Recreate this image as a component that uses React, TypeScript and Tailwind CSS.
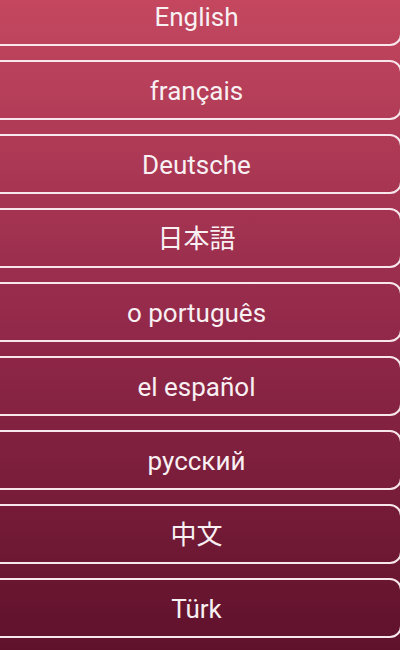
const languages = [
  "English",
  "français",
  "Deutsche",
  "日本語",
  "o português",
  "el español",
  "русский",
  "中文",
  "Türk",
];

export default function App() {
  return (
    <div
      className="h-[650px] w-full overflow-hidden bg-gradient-to-b from-[#c4475f] via-[#93294a] to-[#5f112b]"
      style={{ fontFamily: 'Roboto, "Noto Sans CJK JP", sans-serif' }}
    >
      <div className="-mt-[14px] flex flex-col gap-[14px]">
        {languages.map((lang) => (
          <button
            key={lang}
            className="-ml-[20px] flex h-[60px] w-[422px] shrink-0 items-center justify-center rounded-[12px] border-2 border-[#f7e6eb] pl-[11px] pt-[2px] text-[26px] text-[#f8f0f2]"
          >
            {lang}
          </button>
        ))}
      </div>
    </div>
  );
}
